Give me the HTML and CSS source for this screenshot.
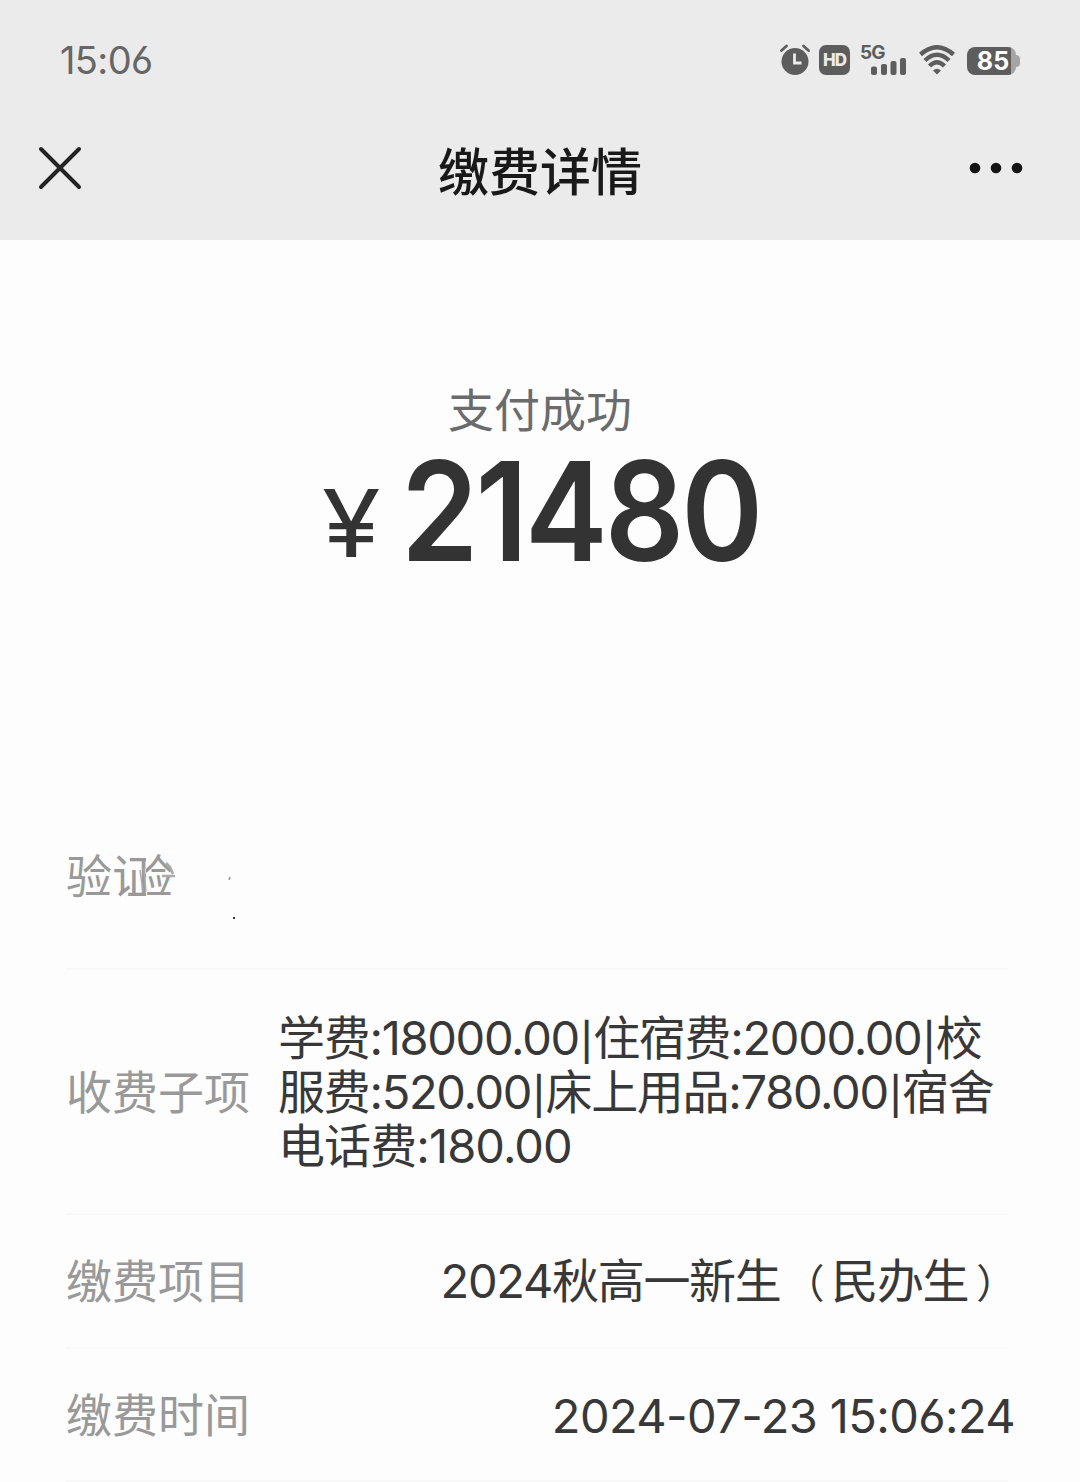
FILE: index.html
```html
<!DOCTYPE html>
<html lang="zh-CN">
<head>
    <meta charset="UTF-8">
    <meta name="viewport" content="width=device-width, initial-scale=1.0">
    <title>缴费详情</title>
    <link rel="stylesheet" href="styles.css">
</head>
<body>
    <header class="header">
        <!-- Status bar -->
        <div class="status-bar">
            <span class="clock">15:06</span>
            <div class="status-icons">
                <svg class="icon-alarm" width="30" height="32" viewBox="0 0 30 32">
                    <circle cx="15" cy="17.500" r="13.500" fill="#5d5d5d"/>
                    <path d="M1.500 6.500 6.500 2M23.500 2l5 4.500" stroke="#5d5d5d" stroke-width="2.800" stroke-linecap="round"/>
                    <path d="M14.500 9.500v9.500h7" fill="none" stroke="#ebebeb" stroke-width="2.800"/>
                </svg>
                <span class="hd">HD</span>
                <div class="signal">
                    <span class="signal-type">5G</span>
                    <svg width="46" height="32" viewBox="0 0 46 32" fill="#5d5d5d">
                        <rect x="10" y="22.500" width="6" height="8.500" rx="2"/>
                        <rect x="20" y="20" width="6" height="11" rx="2"/>
                        <rect x="29.500" y="17" width="6" height="14" rx="2"/>
                        <rect x="39" y="14" width="6" height="17" rx="2"/>
                    </svg>
                </div>
                <svg class="icon-wifi" width="36" height="30" viewBox="0 0 36 30" fill="none" stroke="#5d5d5d" stroke-width="4.400">
                    <path d="M1.500 9.500Q18-5 34.500 9.500"/>
                    <path d="M6 15.500Q18 4 30 15.500"/>
                    <path d="M10.500 21Q18 13.500 25.500 21"/>
                    <path d="M14 25.500Q18 22 22 25.500L18 29.500z" fill="#5d5d5d" stroke="none"/>
                </svg>
                <div class="battery">
                    <span class="battery-level">85</span>
                    <span class="battery-tip"></span>
                </div>
            </div>
        </div>

        <!-- Title bar -->
        <div class="nav">
            <svg class="icon-close" width="44" height="44" viewBox="0 0 44 44">
                <path d="M3 3l38 38M41 3 3 41" stroke="#242424" stroke-width="4" stroke-linecap="round"/>
            </svg>
            <h1>缴费详情</h1>
            <svg class="icon-more" width="56" height="12" viewBox="0 0 56 12" fill="#141414">
                <circle cx="7" cy="6" r="5.300"/>
                <circle cx="28" cy="6" r="5.300"/>
                <circle cx="49" cy="6" r="5.300"/>
            </svg>
        </div>
    </header>

    <main>
        <section class="result">
            <p class="result-text">支付成功</p>
            <p class="amount"><span class="currency">¥</span><span class="number">21480</span></p>
        </section>

        <section class="details">
            <div class="row row-code">
                <span class="label label-code">验证<span class="ghost">验</span></span>
                <svg class="specks" width="80" height="60" viewBox="0 0 80 60">
                    <path d="M-8 17l4 4 3 7M-12 30H1" stroke="#aaa" stroke-width="2.500" fill="none"/>
                    <path d="M-30 22l2 24M-34 24l3 22" stroke="#aaa" stroke-width="1.500"/>
                    <path d="M56 31l-1 3" stroke="#999" stroke-width="1.500"/>
                    <rect x="59" y="71" width="2" height="2" fill="#333"/>
                </svg>
            </div>
            <div class="row row-items">
                <span class="label">收费子项</span>
                <div class="value value-items">
                    <div class="line-1">学费:18000.00<span class="bar">|</span>住宿费:2000.00<span class="bar">|</span>校</div>
                    <div class="line-2">服费:520.00<span class="bar">|</span>床上用品:780.00<span class="bar">|</span>宿舍</div>
                    <div class="line-3">电话费:180.00</div>
                </div>
            </div>
            <div class="row row-project">
                <span class="label">缴费项目</span>
                <span class="value value-project">2024秋高一新生<span class="paren-open">（</span>民办生<span class="paren-close">）</span></span>
            </div>
            <div class="row row-time">
                <span class="label">缴费时间</span>
                <span class="value value-time">2024-07-23 15:06:24</span>
            </div>
        </section>
    </main>
</body>
</html>
```
FILE: styles.css
```css
* {
    margin: 0;
    padding: 0;
    box-sizing: border-box;
}

body {
    font-family: Inter, "Noto Sans CJK SC", sans-serif;
    font-feature-settings: "cv03";
    background: #fdfdfd;
    color: #383838;
    height: 1482px;
    overflow: hidden;
}

.header {
    height: 240px;
    background: #ebebeb;
}

/* Status bar */
.status-bar {
    display: flex;
    justify-content: space-between;
    align-items: center;
    height: 119px;
    padding: 0 60px;
}

.clock {
    font-size: 38px;
    letter-spacing: -0.6px;
    color: #666;
}

.status-icons {
    display: flex;
    align-items: center;
}

.hd {
    width: 31px;
    height: 30px;
    margin: 0 11px 0 9px;
    border-radius: 7px;
    background: #5d5d5d;
    color: #ebebeb;
    font-size: 17px;
    font-weight: 800;
    line-height: 30px;
    letter-spacing: -1px;
    text-align: center;
}

.signal {
    position: relative;
    height: 32px;
}

.signal-type {
    position: absolute;
    left: -1px;
    top: -1px;
    font-size: 19px;
    font-weight: 700;
    line-height: 20px;
    letter-spacing: -1px;
    color: #5d5d5d;
}

.icon-wifi {
    margin: 0 12px;
}

.battery {
    display: flex;
    align-items: center;
    margin-top: 2px;
}

.battery-level {
    width: 49px;
    height: 28px;
    border-radius: 8px;
    background: linear-gradient(90deg, #5d5d5d 44px, #a5a5a5 44px);
    color: #fff;
    font-size: 25px;
    font-weight: 700;
    line-height: 28px;
    text-align: center;
    padding-left: 3px;
}

.battery-tip {
    width: 4px;
    height: 12px;
    border-radius: 0 4px 4px 0;
    background: #a5a5a5;
}

/* Title bar */
.nav {
    display: grid;
    grid-template-columns: 1fr auto 1fr;
    align-items: center;
    height: 98px;
    padding: 0 56px 0 38px;
}

.nav h1 {
    padding: 10px 0 0 18px;
    font-size: 51px;
    font-weight: 500;
    line-height: 60px;
    color: #191919;
}

.icon-more {
    justify-self: end;
}

/* Payment result */
.result {
    height: 570px;
    padding-top: 142px;
    text-align: center;
}

.result-text {
    font-size: 46px;
    line-height: 56px;
    color: #6b6b6b;
}

.amount {
    display: flex;
    align-items: center;
    height: 146px;
    padding-left: 322px;
    line-height: 140px;
    color: #333;
}

.currency {
    width: 79px;
    padding-top: 23px;
    font-size: 94px;
    text-align: left;
    transform: scaleX(1.13);
    transform-origin: left;
}

.number {
    font-size: 138px;
    font-weight: 600;
    letter-spacing: -3.3px;
    transform: scaleX(0.9);
    transform-origin: left;
}

/* Detail rows */
.details {
    padding: 0 66px;
}

.row {
    display: flex;
    justify-content: space-between;
    align-items: center;
    width: 942px;
    border-bottom: 2px solid #f8f8f8;
}

.row-code {
    justify-content: flex-start;
    height: 160px;
    padding-bottom: 26px;
}

.row-items {
    height: 245px;
}

.row-project {
    height: 134px;
}

.row-time {
    height: 133px;
}

.label {
    flex-shrink: 0;
    font-size: 46px;
    line-height: 54px;
    color: #999;
}

.label-code {
    position: relative;
}

/* half-wiped character left over the label */
.ghost {
    position: absolute;
    left: 61px;
    top: 0;
    background: #fdfdfd;
    clip-path: inset(0 0 0 19px);
}

.specks {
    position: relative;
    overflow: visible;
    margin-left: 16px;
}

.value {
    font-size: 47px;
    line-height: 54px;
    letter-spacing: -1.3px;
    white-space: nowrap;
}

.value-items {
    width: 730px;
}

.line-3 {
    letter-spacing: -0.9px;
}

.bar {
    margin: 0 1.4px;
    font-size: 37px;
    font-weight: 500;
    line-height: 1;
}

.value-project {
    margin-right: -7px;
}

.paren-open,
.paren-close {
    font-size: 40px;
    line-height: 1;
}

.paren-open {
    margin: 0 8px 0 4px;
}

.paren-close {
    margin-left: 8px;
}

.value-time {
    margin-right: -7px;
    padding-top: 2px;
    letter-spacing: -0.6px;
}
```
